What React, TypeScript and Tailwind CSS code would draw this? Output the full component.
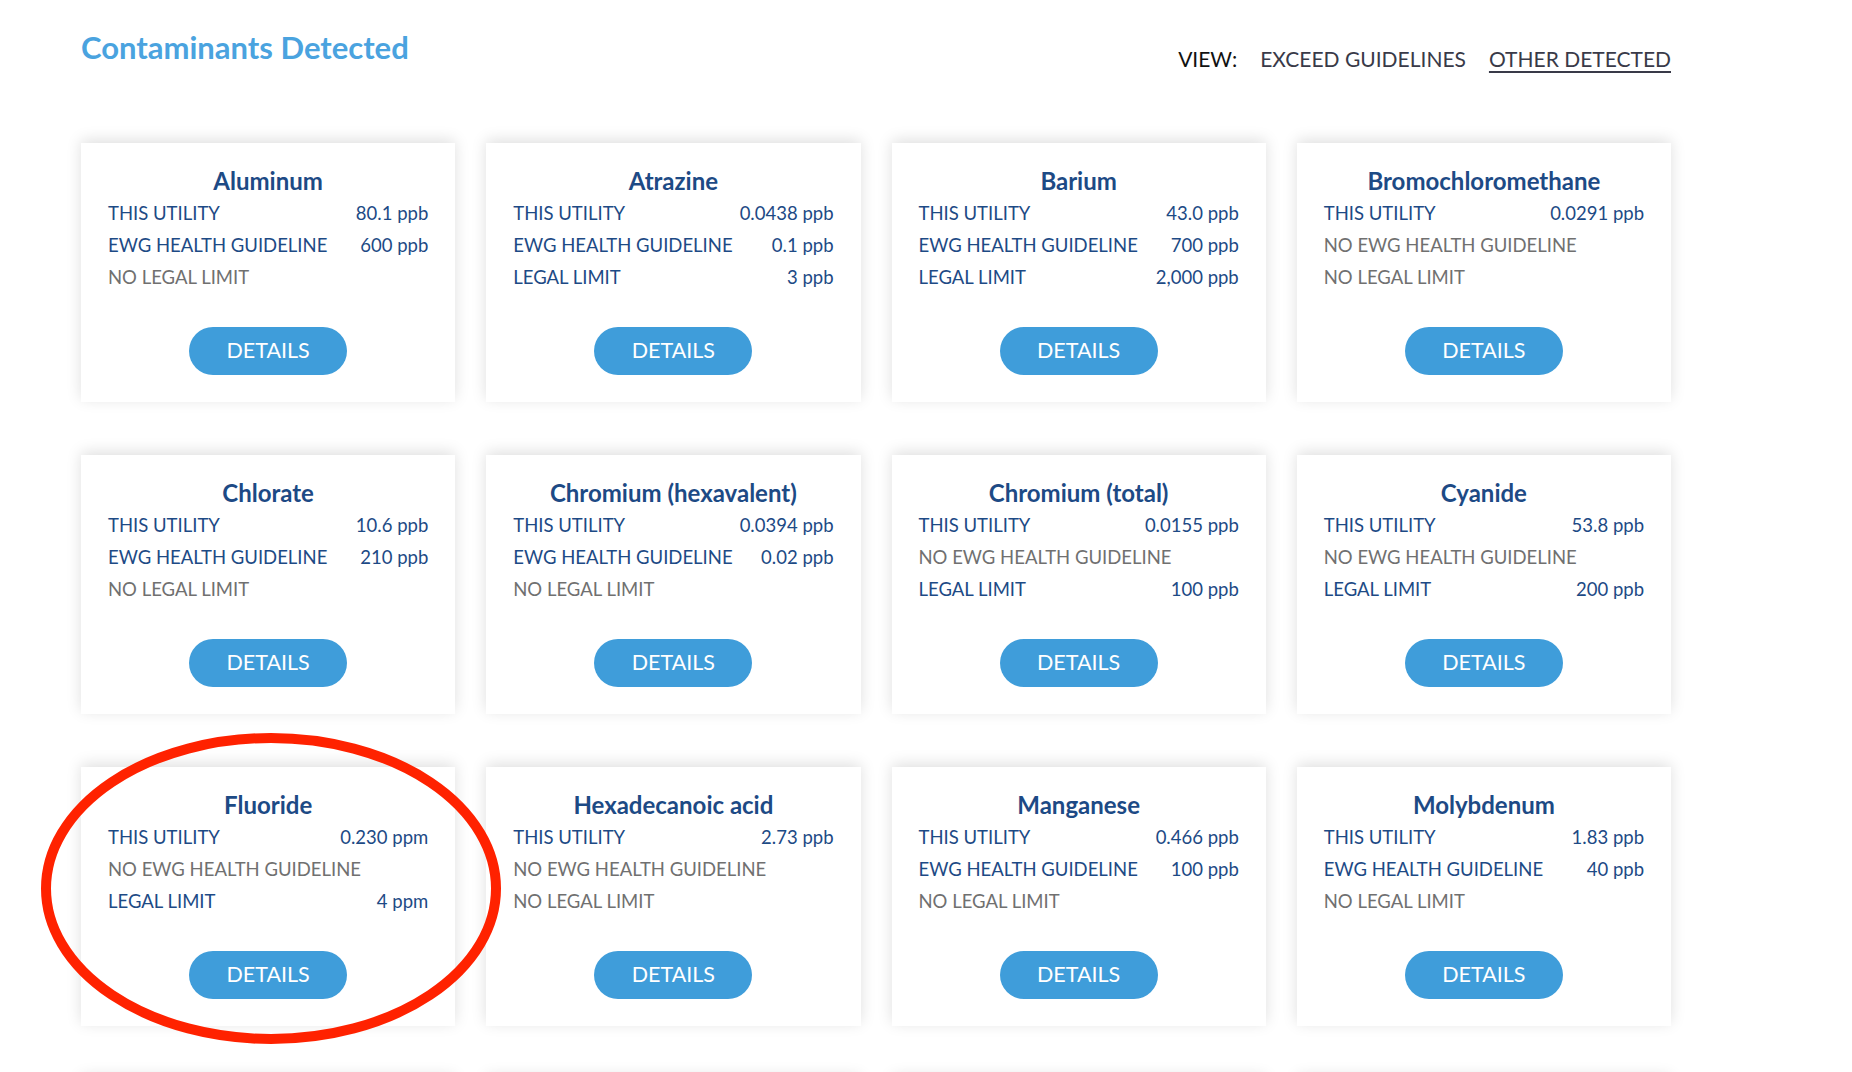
import React from "react";

type Row = { label: string; value?: string; muted?: boolean };
type Item = { name: string; rows: Row[] };

const items: Item[] = [
  {
    name: "Aluminum",
    rows: [
      { label: "THIS UTILITY", value: "80.1 ppb" },
      { label: "EWG HEALTH GUIDELINE", value: "600 ppb" },
      { label: "NO LEGAL LIMIT", muted: true },
    ],
  },
  {
    name: "Atrazine",
    rows: [
      { label: "THIS UTILITY", value: "0.0438 ppb" },
      { label: "EWG HEALTH GUIDELINE", value: "0.1 ppb" },
      { label: "LEGAL LIMIT", value: "3 ppb" },
    ],
  },
  {
    name: "Barium",
    rows: [
      { label: "THIS UTILITY", value: "43.0 ppb" },
      { label: "EWG HEALTH GUIDELINE", value: "700 ppb" },
      { label: "LEGAL LIMIT", value: "2,000 ppb" },
    ],
  },
  {
    name: "Bromochloromethane",
    rows: [
      { label: "THIS UTILITY", value: "0.0291 ppb" },
      { label: "NO EWG HEALTH GUIDELINE", muted: true },
      { label: "NO LEGAL LIMIT", muted: true },
    ],
  },
  {
    name: "Chlorate",
    rows: [
      { label: "THIS UTILITY", value: "10.6 ppb" },
      { label: "EWG HEALTH GUIDELINE", value: "210 ppb" },
      { label: "NO LEGAL LIMIT", muted: true },
    ],
  },
  {
    name: "Chromium (hexavalent)",
    rows: [
      { label: "THIS UTILITY", value: "0.0394 ppb" },
      { label: "EWG HEALTH GUIDELINE", value: "0.02 ppb" },
      { label: "NO LEGAL LIMIT", muted: true },
    ],
  },
  {
    name: "Chromium (total)",
    rows: [
      { label: "THIS UTILITY", value: "0.0155 ppb" },
      { label: "NO EWG HEALTH GUIDELINE", muted: true },
      { label: "LEGAL LIMIT", value: "100 ppb" },
    ],
  },
  {
    name: "Cyanide",
    rows: [
      { label: "THIS UTILITY", value: "53.8 ppb" },
      { label: "NO EWG HEALTH GUIDELINE", muted: true },
      { label: "LEGAL LIMIT", value: "200 ppb" },
    ],
  },
  {
    name: "Fluoride",
    rows: [
      { label: "THIS UTILITY", value: "0.230 ppm" },
      { label: "NO EWG HEALTH GUIDELINE", muted: true },
      { label: "LEGAL LIMIT", value: "4 ppm" },
    ],
  },
  {
    name: "Hexadecanoic acid",
    rows: [
      { label: "THIS UTILITY", value: "2.73 ppb" },
      { label: "NO EWG HEALTH GUIDELINE", muted: true },
      { label: "NO LEGAL LIMIT", muted: true },
    ],
  },
  {
    name: "Manganese",
    rows: [
      { label: "THIS UTILITY", value: "0.466 ppb" },
      { label: "EWG HEALTH GUIDELINE", value: "100 ppb" },
      { label: "NO LEGAL LIMIT", muted: true },
    ],
  },
  {
    name: "Molybdenum",
    rows: [
      { label: "THIS UTILITY", value: "1.83 ppb" },
      { label: "EWG HEALTH GUIDELINE", value: "40 ppb" },
      { label: "NO LEGAL LIMIT", muted: true },
    ],
  },
];

function Card({ item, circled }: { item: Item; circled?: boolean }) {
  return (
    <div className="relative">
      <div className="bg-white h-[259px] px-[27px] pt-[24px] flex flex-col shadow-[0_-3px_14px_rgba(0,0,0,0.13)]">
        <h3 className="text-center font-bold text-[24px] leading-[28px] text-[#1d4a85]">
          {item.name}
        </h3>
        <div className="mt-[2px] flex flex-col">
          {item.rows.map((r, i) => (
            <div
              key={i}
              className={
                r.muted
                  ? "flex justify-between text-[18.5px] leading-[32px] text-[#707070]"
                  : "flex justify-between text-[18.5px] leading-[32px] text-[#1d4a85]"
              }
            >
              <span>{r.label}</span>
              {r.value && <span>{r.value}</span>}
            </div>
          ))}
        </div>
        <div className="mt-[34px] flex justify-center">
          <button className="w-[158px] h-[48px] rounded-full bg-[#3f9dda] text-white text-[21.5px] leading-none">
            DETAILS
          </button>
        </div>
      </div>
      {circled && (
        <svg
          className="absolute z-10 left-[-41px] top-[-35px] pointer-events-none"
          width="462"
          height="313"
          viewBox="0 0 462 313"
        >
          <ellipse
            cx="231"
            cy="156.5"
            rx="225"
            ry="150.5"
            fill="none"
            stroke="#ff2200"
            strokeWidth="10"
          />
        </svg>
      )}
    </div>
  );
}

function GhostCard() {
  return <div className="bg-white h-[259px] shadow-[0_-3px_14px_rgba(0,0,0,0.13)]" />;
}

export default function App() {
  return (
    <div className="min-h-screen bg-white font-['Lato','Open_Sans',sans-serif]">
      <div className="w-[1590px] ml-[81px] pt-[29px]">
        <div className="flex justify-between items-start">
          <h2 className="font-bold text-[31px] leading-[36px] text-[#4aa3df]">
            Contaminants Detected
          </h2>
          <div className="mt-[18px] flex items-center gap-[23px] text-[21px] leading-[24px]">
            <span className="text-[#111111]">VIEW:</span>
            <span className="text-[#393a48]">EXCEED GUIDELINES</span>
            <span className="text-[#393a48] underline decoration-2 underline-offset-[4px]">
              OTHER DETECTED
            </span>
          </div>
        </div>
        <div className="mt-[72px] grid grid-cols-4 gap-x-[31px] gap-y-[53px]">
          {items.map((it, i) => (
            <Card key={i} item={it} circled={it.name === "Fluoride"} />
          ))}
          <GhostCard />
          <GhostCard />
          <GhostCard />
          <GhostCard />
        </div>
      </div>
    </div>
  );
}
